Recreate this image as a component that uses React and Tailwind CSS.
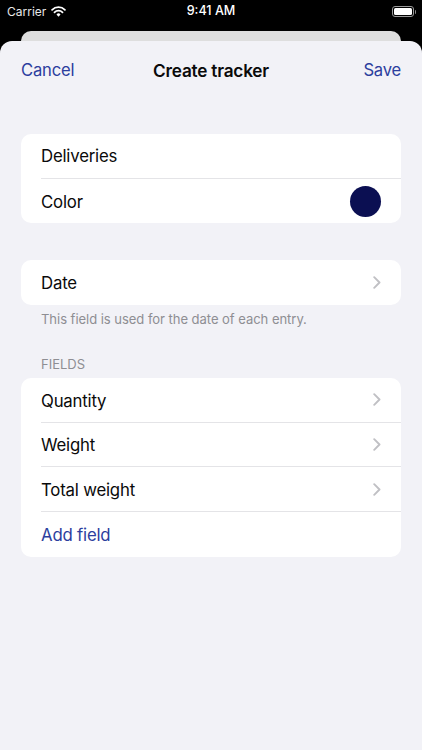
const font = { fontFamily: "Inter, 'Liberation Sans', sans-serif" };

function Chevron() {
  return (
    <svg width="8" height="13" viewBox="0 0 8 13" fill="none" className="shrink-0">
      <path d="M1.2 1.2L6.5 6.5L1.2 11.8" stroke="#c0c0c4" strokeWidth="1.9" strokeLinecap="round" strokeLinejoin="round" />
    </svg>
  );
}

function Row({ label, chevron, blue, last, right }) {
  return (
    <div className="pl-5">
      <div className={`h-[44.7px] flex items-center justify-between pr-5 ${last ? "" : "border-b border-[#e4e4e7]"}`}>
        <span className={`pt-[2px] text-[16.8px] leading-none tracking-[-0.2px] ${blue ? "text-[#2c3e9e]" : "text-[#0a0a0a]"}`}>{label}</span>
        {chevron && <Chevron />}
        {right}
      </div>
    </div>
  );
}

function Wifi() {
  return (
    <svg width="15" height="11" viewBox="0 0 16 12" fill="none">
      <path d="M1 4.2A10 10 0 0 1 15 4.2" stroke="#fff" strokeWidth="1.9" strokeLinecap="round" />
      <path d="M3.6 6.9A6.3 6.3 0 0 1 12.4 6.9" stroke="#fff" strokeWidth="1.9" strokeLinecap="round" />
      <path d="M8 11.6L5.8 9.2A3 3 0 0 1 10.2 9.2Z" fill="#fff" />
    </svg>
  );
}

export default function App() {
  return (
    <div className="w-[422px] h-[750px] bg-black overflow-hidden flex flex-col" style={font}>
      <div className="h-[23px] flex items-center justify-between pl-[7px] pr-[6px] text-white relative shrink-0">
        <div className="flex items-center gap-[5px]">
          <span className="text-[12px] leading-none text-[#e8e8e8]">Carrier</span>
          <Wifi />
        </div>
        <span className="absolute left-0 right-0 text-center text-[12.6px] font-medium leading-none">9:41 AM</span>
        <div className="flex items-center gap-[1px]">
          <div className="w-[22px] h-[11px] rounded-[3px] border border-[#9a9a9a] p-[1px]">
            <div className="w-full h-full bg-white rounded-[1.5px]" />
          </div>
          <div className="w-[1px] h-[4px] bg-[#8a8a8a] rounded-r" />
        </div>
      </div>
      <div className="h-[10px] mt-[8px] mx-[21px] bg-[#dedede] rounded-t-[10px] shrink-0" />
      <div className="flex-1 bg-[#f2f2f7] rounded-t-[12px] px-[21px]">
        <div className="h-[59px] grid grid-cols-[1fr_auto_1fr] items-center">
          <span className="text-[16.6px] text-[#2c3e9e] tracking-[-0.2px]">Cancel</span>
          <span className="text-[17.2px] font-semibold text-[#0a0a0a] tracking-[-0.2px]">Create tracker</span>
          <span className="text-[16.6px] text-[#2c3e9e] tracking-[-0.2px] text-right">Save</span>
        </div>
        <div className="mt-[34px] bg-white rounded-[10px] overflow-hidden">
          <Row label="Deliveries" />
          <Row label="Color" last right={<div className="w-[31px] h-[31px] rounded-full bg-[#0b0f52]" />} />
        </div>
        <div className="mt-[37px] bg-white rounded-[10px] overflow-hidden">
          <Row label="Date" chevron last />
        </div>
        <p className="mt-[6px] pl-5 text-[13.05px] leading-4 text-[#8e8e93] tracking-[-0.05px]">This field is used for the date of each entry.</p>
        <p className="mt-[29px] pl-5 text-[13px] leading-4 text-[#8e8e93]">FIELDS</p>
        <div className="mt-[6px] bg-white rounded-[10px] overflow-hidden">
          <Row label="Quantity" chevron />
          <Row label="Weight" chevron />
          <Row label="Total weight" chevron />
          <Row label="Add field" blue last />
        </div>
      </div>
    </div>
  );
}
